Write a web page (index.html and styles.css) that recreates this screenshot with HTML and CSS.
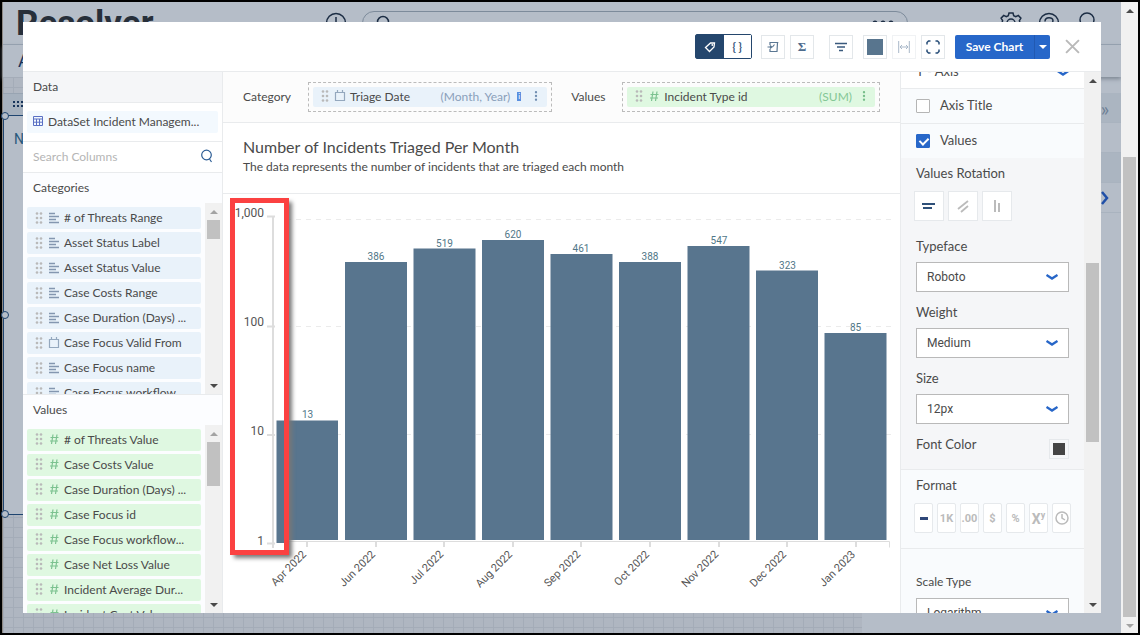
FILE: index.html
```
<!DOCTYPE html>
<html lang="en">

<head>
    <meta charset="UTF-8">
    <meta name="viewport" content="width=device-width, initial-scale=1.0">
    <title>Chart Editor</title>
    <link rel="stylesheet" href="styles.css">
</head>
<body>

    <!-- shared icons -->
    <svg class="sprite" xmlns="http://www.w3.org/2000/svg">
        <symbol id="grip" viewBox="0 0 8 12">
            <g fill="#b9b9b9"><circle cx="2" cy="1.500" r="1.300"/><circle cx="6" cy="1.500" r="1.300"/><circle cx="2" cy="6" r="1.300"/><circle cx="6" cy="6" r="1.300"/><circle cx="2" cy="10.500" r="1.300"/><circle cx="6" cy="10.500" r="1.300"/></g>
        </symbol>
        <symbol id="text" viewBox="0 0 12 12">
            <path d="M1 1.500h6M1 4.500h10M1 7.500h7M1 10.500h10" stroke="#8497b0" stroke-width="1.600"/>
        </symbol>
        <symbol id="date" viewBox="0 0 12 12">
            <path d="M1.500 2.500h9v8h-9zM3.500 0v3M8.500 0v3" fill="none" stroke="#94a8be" stroke-width="1.200"/>
        </symbol>
        <symbol id="hash" viewBox="0 0 12 12">
            <path d="M5 1.500L3.500 11M9 1.500L7.500 11M2.500 4.500h8M2 8h8" fill="none" stroke="#7cc290" stroke-width="1.200"/>
        </symbol>
        <symbol id="more" viewBox="0 0 4 12">
            <circle cx="2" cy="1.500" r="1.400"/><circle cx="2" cy="6" r="1.400"/><circle cx="2" cy="10.500" r="1.400"/>
        </symbol>
        <symbol id="chevron" viewBox="0 0 12 8">
            <path d="M.5 2L6 5.500 11.500 2" fill="none" stroke="#2766c8" stroke-width="2.400"/>
        </symbol>
        <symbol id="up" viewBox="0 0 8 4"><path d="M0 4L4 0l4 4z"/></symbol>
        <symbol id="down" viewBox="0 0 8 4"><path d="M0 0l4 4 4-4z"/></symbol>
    </svg>

    <div class="app">
        <div class="page">
            <header class="topbar">
                <span class="logo">Resolver</span>
                <svg class="add" viewBox="0 0 22 22"><circle cx="11" cy="11" r="9.500"/><path d="M11 5v12M5 11h12"/></svg>
                <div class="search-pill">
                    <svg viewBox="0 0 16 16"><circle cx="8" cy="7" r="5.500"/><path d="M12 11l3 4"/></svg>
                    <svg class="dots" viewBox="0 0 24 6"><circle cx="4" cy="3" r="2.500"/><circle cx="12" cy="3" r="2.500"/><circle cx="20" cy="3" r="2.500"/></svg>
                </div>
                <div class="top-icons">
                    <svg viewBox="0 0 22 22"><path d="M9 1h4l.7 2.800 2 .9L18.300 3.400l2.600 2.800-1.500 2.400.6 2.400-.6 2.400 1.500 2.400-2.600 2.800-2.600-1.300-2 .9L13 21H9l-.7-2.800-2-.9-2.600 1.300-2.600-2.800 1.500-2.400L2 11l.6-2.400-1.500-2.400 2.600-2.800 2.600 1.300 2-.9z"/><circle cx="11" cy="11" r="4"/></svg>
                    <svg viewBox="0 0 22 22"><circle cx="11" cy="11" r="9.500"/><path d="M7 9.500c0-5 8-5 8-.5 0 3-4 2.500-4 5M11 16v2"/></svg>
                    <svg viewBox="0 0 22 22"><circle cx="11" cy="8" r="7"/><path d="M1 22c2-9 18-9 20 0"/></svg>
                </div>
            </header>
            <nav class="navbar"><span>Application</span></nav>
            <div class="workspace">
                <div class="canvas">
                    <div class="widget">
                        <div class="widget-head"><svg class="widget-grip" viewBox="0 0 12 8"><path d="M0 0h2v2H0zM4 0h2v2H4zM8 0h2v2H8zM0 4h2v2H0zM4 4h2v2H4zM8 4h2v2H8z"/></svg></div>
                        <div class="widget-body">
                            <span class="widget-title">Number</span>
                            <i class="handle h-top"></i>
                            <i class="handle h-mid"></i>
                            <i class="handle h-end"></i>
                        </div>
                    </div>
                </div>
                <aside class="side">
                    <div class="side-row shade">»</div>
                    <div class="side-row"></div>
                    <div class="side-row shade"></div>
                    <div class="side-row"><svg viewBox="0 0 10 14"><path d="M2 1l5 6-5 6" fill="none" stroke="#1f4fa8" stroke-width="2.500"/></svg></div>
                </aside>
            </div>
        </div>
        <div class="scrollbar page-scroll">
            <svg class="arrow"><use href="#up"/></svg>
            <div class="track"><div class="thumb"></div></div>
            <svg class="arrow light"><use href="#down"/></svg>
        </div>
    </div>

    <div class="modal">
        <div class="toolbar">
            <div class="toggle">
                <button class="on" aria-label="Labels"><svg viewBox="0 0 12 12"><path d="M1.500 6.500L6.500 2h4l-.5 4-4.500 4.500z" fill="none" stroke="#fff" stroke-width="1.300"/><circle cx="8.300" cy="4" r=".9" fill="#fff"/></svg></button>
                <button aria-label="Code">{ }</button>
            </div>
            <div class="tools">
                <button class="tool" aria-label="Formula"><svg viewBox="0 0 12 12"><path d="M3 4V1.500h8.300M10.500 1.500L10 10.500H3V8M.5 6h4M3 4.500L4.800 6 3 7.500M7.500 3.500L5.500 6" fill="none" stroke="#5b7793" stroke-width="1.200"/></svg></button>
                <button class="tool sigma" aria-label="Sum">Σ</button>
            </div>
            <button class="tool filter" aria-label="Filter"><svg viewBox="0 0 12 12"><path d="M0 2.500h12M2 6h8M4 9.500h4" stroke="#3a5a7d" stroke-width="1.300"/></svg></button>
            <div class="tools">
                <button class="tool" aria-label="Color"><span class="swatch"></span></button>
                <button class="tool faded" aria-label="Fit width"><svg viewBox="0 0 12 12"><path d="M.7 0v12M11.300 0v12M2 6h8M4 4L2 6l2 2M8 4l2 2-2 2" fill="none" stroke="#a9b8c9"/></svg></button>
                <button class="tool" aria-label="Full screen"><svg class="full" viewBox="0 0 14 14"><path d="M1 4.500V2.500L2.500 1h2M9.500 1h2L13 2.500v2M13 9.500v2L11.500 13h-2M4.500 13h-2L1 11.500v-2" fill="none" stroke="#274d78" stroke-width="1.500"/></svg></button>
            </div>
            <div class="save">
                <button class="save-btn">Save Chart</button>
                <button class="save-more" aria-label="More save options"><svg viewBox="0 0 8 4"><use href="#down"/></svg></button>
            </div>
            <button class="close" aria-label="Close"><svg viewBox="0 0 14 14"><path d="M1 1l12 12M13 1L1 13" stroke="#b9b9b9" stroke-width="1.800"/></svg></button>
        </div>

        <div class="content">
            <section class="data">
                <h2 class="data-title">Data</h2>
                <div class="dataset">
                    <div class="dataset-name"><svg viewBox="0 0 10 10"><path d="M.5.5h9v9h-9zM.5 3h9M.5 6.200h9M3.500 3v6.500M6.500 3v6.500" fill="none" stroke="#5a70c4"/></svg>DataSet Incident Managem...</div>
                </div>
                <div class="search">
                    <input type="text" placeholder="Search Columns" aria-label="Search Columns">
                    <svg viewBox="0 0 14 14"><circle cx="6.500" cy="6" r="4.800" fill="none" stroke="#2b5c94" stroke-width="1.200"/><path d="M9.500 10l2 3" stroke="#2b5c94" stroke-width="1.200"/></svg>
                </div>

                <div class="group categories">
                    <h3>Categories</h3>
                    <div class="list-wrap">
                        <ul class="list">
                            <li><svg class="grip"><use href="#grip"/></svg><svg class="kind"><use href="#text"/></svg># of Threats Range</li>
                            <li><svg class="grip"><use href="#grip"/></svg><svg class="kind"><use href="#text"/></svg>Asset Status Label</li>
                            <li><svg class="grip"><use href="#grip"/></svg><svg class="kind"><use href="#text"/></svg>Asset Status Value</li>
                            <li><svg class="grip"><use href="#grip"/></svg><svg class="kind"><use href="#text"/></svg>Case Costs Range</li>
                            <li><svg class="grip"><use href="#grip"/></svg><svg class="kind"><use href="#text"/></svg>Case Duration (Days) ...</li>
                            <li><svg class="grip"><use href="#grip"/></svg><svg class="kind"><use href="#date"/></svg>Case Focus Valid From</li>
                            <li><svg class="grip"><use href="#grip"/></svg><svg class="kind"><use href="#text"/></svg>Case Focus name</li>
                            <li><svg class="grip"><use href="#grip"/></svg><svg class="kind"><use href="#text"/></svg>Case Focus workflow...</li>
                        </ul>
                        <div class="scrollbar">
                            <svg class="arrow light"><use href="#up"/></svg>
                            <div class="track"><div class="thumb"></div></div>
                            <svg class="arrow"><use href="#down"/></svg>
                        </div>
                    </div>
                </div>

                <div class="group values">
                    <h3>Values</h3>
                    <div class="list-wrap">
                        <ul class="list">
                            <li><svg class="grip"><use href="#grip"/></svg><svg class="kind"><use href="#hash"/></svg># of Threats Value</li>
                            <li><svg class="grip"><use href="#grip"/></svg><svg class="kind"><use href="#hash"/></svg>Case Costs Value</li>
                            <li><svg class="grip"><use href="#grip"/></svg><svg class="kind"><use href="#hash"/></svg>Case Duration (Days) ...</li>
                            <li><svg class="grip"><use href="#grip"/></svg><svg class="kind"><use href="#hash"/></svg>Case Focus id</li>
                            <li><svg class="grip"><use href="#grip"/></svg><svg class="kind"><use href="#hash"/></svg>Case Focus workflow...</li>
                            <li><svg class="grip"><use href="#grip"/></svg><svg class="kind"><use href="#hash"/></svg>Case Net Loss Value</li>
                            <li><svg class="grip"><use href="#grip"/></svg><svg class="kind"><use href="#hash"/></svg>Incident Average Dur...</li>
                            <li><svg class="grip"><use href="#grip"/></svg><svg class="kind"><use href="#hash"/></svg>Incident Cost Value</li>
                        </ul>
                        <div class="scrollbar">
                            <svg class="arrow light"><use href="#up"/></svg>
                            <div class="track"><div class="thumb"></div></div>
                            <svg class="arrow"><use href="#down"/></svg>
                        </div>
                    </div>
                </div>
            </section>

            <main class="main">
                <div class="fields">
                    <span class="field-label">Category</span>
                    <div class="drop category">
                        <div class="pill"><svg class="grip"><use href="#grip"/></svg><svg class="kind"><use href="#date"/></svg><span class="pill-name">Triage Date</span><span class="agg">(Month, Year)</span><span class="info">i</span><svg class="more"><use href="#more"/></svg></div>
                    </div>
                    <span class="field-label">Values</span>
                    <div class="drop value">
                        <div class="pill"><svg class="grip"><use href="#grip"/></svg><svg class="kind"><use href="#hash"/></svg><span class="pill-name">Incident Type id</span><span class="agg">(SUM)</span><svg class="more"><use href="#more"/></svg></div>
                    </div>
                </div>
                <div class="titles">
                    <h1>Number of Incidents Triaged Per Month</h1>
                    <p>The data represents the number of incidents that are triaged each month</p>
                </div>
                <svg class="chart" viewBox="0 0 677 419" preserveAspectRatio="xMinYMin meet">
                    <!-- grid and x axis -->
                    <path class="grid" d="M53 25.500h615M53 132.500h615M53 240.500h615"/>
                    <path class="axis" d="M53 347.500h613.500v6"/>
                    <path class="tick" d="M84 347v6M153 347v6M221 347v6M290 347v6M358 347v6M427 347v6M496 347v6M564 347v6M633 347v6"/>

                    <g class="bars">
                        <rect x="53" y="226.500" width="62" height="119.500"/>
                        <rect x="122" y="68" width="62" height="278"/>
                        <rect x="190.500" y="54.500" width="62" height="291.500"/>
                        <rect x="259" y="46" width="62" height="300"/>
                        <rect x="327.500" y="60" width="62" height="286"/>
                        <rect x="396" y="68" width="62" height="278"/>
                        <rect x="464.500" y="52" width="62" height="294"/>
                        <rect x="533" y="76.500" width="62" height="269.500"/>
                        <rect x="601.500" y="139" width="62" height="207"/>
                    </g>
                    <g class="counts">
                        <text x="84.500" y="224">13</text>
                        <text x="153" y="66">386</text>
                        <text x="221.500" y="53">519</text>
                        <text x="290" y="44">620</text>
                        <text x="358" y="58">461</text>
                        <text x="427" y="66">388</text>
                        <text x="496" y="50">547</text>
                        <text x="564.500" y="75">323</text>
                        <text x="632.500" y="137">85</text>
                    </g>

                    <!-- highlighted log scale -->
                    <rect class="mark-back" x="8" y="5" width="58" height="356"/>
                    <rect class="mark-bar" x="53.500" y="226.500" width="10.500" height="122.500"/>
                    <path class="scale" d="M50 22v332M44 22.500h8M44 132.500h8M44 241h8M44 349.500h8"/>
                    <rect class="mark" x="9.500" y="6.500" width="54" height="352"/>
                    <g class="scale-text">
                        <text x="41" y="23">1,000</text>
                        <text x="41" y="132">100</text>
                        <text x="41" y="241">10</text>
                        <text x="41" y="351">1</text>
                    </g>

                    <g class="months">
                        <text transform="translate(84 361) rotate(-45)">Apr 2022</text>
                        <text transform="translate(153 361) rotate(-45)">Jun 2022</text>
                        <text transform="translate(221 361) rotate(-45)">Jul 2022</text>
                        <text transform="translate(290 361) rotate(-45)">Aug 2022</text>
                        <text transform="translate(358 361) rotate(-45)">Sep 2022</text>
                        <text transform="translate(427 361) rotate(-45)">Oct 2022</text>
                        <text transform="translate(496 361) rotate(-45)">Nov 2022</text>
                        <text transform="translate(564 361) rotate(-45)">Dec 2022</text>
                        <text transform="translate(633 361) rotate(-45)">Jan 2023</text>
                    </g>
                </svg>
            </main>

            <section class="settings">
                <div class="options">
                    <div class="axis-row"><span>Y - Axis</span><svg><use href="#chevron"/></svg></div>
                    <div class="check-row"><input type="checkbox" id="axisTitle"><label for="axisTitle">Axis Title</label></div>
                    <div class="check-row"><input type="checkbox" id="axisValues" checked><label for="axisValues">Values</label></div>
                    <div class="values-box">
                        <p class="opt-label">Values Rotation</p>
                        <div class="rotations">
                            <button aria-label="Horizontal"><svg viewBox="0 0 14 14"><path d="M0 5h13M1 9h9" stroke="#2f5079" stroke-width="2"/></svg></button>
                            <button aria-label="Diagonal"><svg viewBox="0 0 14 14"><path d="M2 10L12 2M5 13l7-6" stroke="#bbb" stroke-width="1.800"/></svg></button>
                            <button aria-label="Vertical"><svg viewBox="0 0 14 14"><path d="M5 1v12M9 4v9" stroke="#bbb" stroke-width="2"/></svg></button>
                        </div>
                        <label class="opt-label" for="typeface">Typeface</label>
                        <div class="select"><select id="typeface"><option>Roboto</option></select><svg><use href="#chevron"/></svg></div>
                        <label class="opt-label" for="weight">Weight</label>
                        <div class="select"><select id="weight"><option>Medium</option></select><svg><use href="#chevron"/></svg></div>
                        <label class="opt-label" for="size">Size</label>
                        <div class="select"><select id="size"><option>12px</option></select><svg><use href="#chevron"/></svg></div>
                        <div class="color-row"><span class="opt-label">Font Color</span><button aria-label="Font Color"></button></div>
                    </div>
                    <div class="format-box">
                        <p class="opt-label">Format</p>
                        <div class="formats">
                            <button class="active" aria-label="None"><svg viewBox="0 0 8 3"><path d="M0 1.500h8" stroke="#2f4779" stroke-width="3"/></svg></button>
                            <button>1K</button>
                            <button>.00</button>
                            <button>$</button>
                            <button>%</button>
                            <button class="power">X<sup>y</sup></button>
                            <button aria-label="Time"><svg class="clock" viewBox="0 0 14 14"><circle cx="7" cy="7" r="6" fill="none" stroke="#bbb" stroke-width="1.500"/><path d="M7 3v4l3 2" fill="none" stroke="#bbb" stroke-width="1.500"/></svg></button>
                        </div>
                    </div>
                    <div class="scale-box">
                        <label class="opt-label small" for="scaleType">Scale Type</label>
                        <div class="select"><select id="scaleType"><option>Logarithm</option></select><svg><use href="#chevron"/></svg></div>
                    </div>
                </div>
                <div class="scrollbar">
                    <svg class="arrow"><use href="#up"/></svg>
                    <div class="track"><div class="thumb"></div></div>
                    <svg class="arrow"><use href="#down"/></svg>
                </div>
            </section>
        </div>
    </div>

</body>

</html>
```
FILE: styles.css
```
* {
    box-sizing: border-box;
}

body {
    margin: 0;
    height: 100vh;
    overflow: hidden;
    font-family: Lato, sans-serif;
    font-size: 12px;
    color: #4a4a4a;
}

button,
input,
select {
    font-family: inherit;
    font-size: inherit;
    color: inherit;
    margin: 0;
    padding: 0;
}

h1,
h2,
h3,
p,
ul {
    margin: 0;
    padding: 0;
    font-weight: normal;
    list-style: none;
}

svg {
    flex: none;
}

.sprite {
    position: absolute;
    width: 0;
    height: 0;
}

/* page behind the dialog */
.app {
    display: flex;
    height: 100vh;
    border: 2px solid #000;
    background-color: #b5bdc8;
}

.page {
    flex: 1;
    display: flex;
    flex-direction: column;
    border-left: 1px solid #8e8984;
}

.topbar {
    display: flex;
    align-items: center;
    height: 43px;
    padding-left: 13px;
    border-bottom: 1px solid #98a4b2;
    overflow: hidden;
}

.topbar svg {
    fill: none;
    stroke: #1c2d44;
    stroke-width: 1.5;
}

.logo {
    width: 309px;
    font: bold 35px Roboto, sans-serif;
    color: #272f3a;
}

.add {
    width: 22px;
    height: 22px;
}

.search-pill {
    flex: 1;
    display: flex;
    justify-content: space-between;
    align-items: center;
    height: 24px;
    margin: 0 92px 0 15px;
    padding: 0 12px;
    border: 1px solid #7d8b9b;
    border-radius: 12px;
}

.search-pill svg {
    width: 16px;
    height: 16px;
}

.search-pill .dots {
    width: 24px;
    height: 6px;
    fill: #1c2d44;
    stroke: none;
}

.top-icons {
    display: flex;
    gap: 16px;
    padding-right: 23px;
}

.top-icons svg {
    width: 22px;
    height: 22px;
}

.navbar {
    height: 32px;
    padding: 4px 15px;
    font: 18px/24px Roboto, sans-serif;
    color: #17345a;
    box-shadow: 0 2px 4px #7d8793;
}

.workspace {
    flex: 1;
    display: flex;
}

.canvas {
    flex: 1;
    margin-right: 227px;
    padding-top: 16px;
    background-color: #afb6c1;
    background-image: linear-gradient(#a4acb8 1px, transparent 1px), linear-gradient(90deg, #a4acb8 1px, transparent 1px);
    background-size: 10px 10px;
}

.widget-head {
    height: 22px;
    padding: 7px 10px;
    background-color: #a6b1be;
    border-top: 1px solid #98a4b2;
}

.widget-grip {
    display: block;
    width: 12px;
    height: 8px;
    fill: #17345a;
}

.widget-body {
    position: relative;
    height: 400px;
    padding: 12px 10px;
    background-color: #b5bdc8;
    border: 1px solid #1f4570;
}

.widget-title {
    display: block;
    height: 34px;
    font: 14px/22px Roboto, sans-serif;
    color: #28597c;
}

.handle {
    position: absolute;
    left: -3px;
    width: 8px;
    height: 8px;
    border: 1px solid #1f4570;
    border-radius: 50%;
    background-color: #b5bdc8;
}

.h-top {
    top: -4px;
}

.h-mid {
    top: 195px;
}

.h-end {
    bottom: -4px;
}

.side {
    width: 32px;
    padding-top: 16px;
}

.side-row {
    display: flex;
    align-items: center;
    justify-content: center;
    height: 30px;
    font-size: 20px;
    color: #6e8095;
    border-bottom: 1px solid #a9b3bf;
}

.shade {
    background-color: #abb5c1;
}

.side-row svg {
    width: 10px;
    height: 14px;
}

/* scrollbars */
.scrollbar {
    flex: none;
    display: flex;
    flex-direction: column;
    align-items: center;
    width: 17px;
    background-color: #f1f1f1;
}

.arrow {
    width: 8px;
    height: 4px;
    margin: 7px 0 6px;
    fill: #4a4a4a;
}

.light {
    fill: #a3a3a3;
}

.track {
    flex: 1;
    width: 13px;
}

.thumb {
    height: 19px;
    background-color: #c1c1c1;
}

.page-scroll .track {
    padding-top: 138px;
}

.page-scroll .thumb {
    height: 460px;
}

/* dialog */
.modal {
    position: fixed;
    top: 22px;
    right: 39px;
    bottom: 22px;
    left: 23px;
    display: flex;
    flex-direction: column;
    background-color: #fff;
    overflow: hidden;
}

.toolbar {
    display: flex;
    flex: none;
    align-items: center;
    justify-content: flex-end;
    height: 50px;
    padding-right: 21px;
    border-bottom: 1px solid #e9ebed;
}

.toggle {
    display: flex;
    width: 57px;
    height: 25px;
    margin-right: 9px;
    border: 1px solid #24466d;
    border-radius: 2px;
}

.toggle button {
    flex: 1;
    border: 0;
    background-color: #fff;
    color: #35557a;
    font-size: 11px;
    font-weight: bold;
}

.toggle .on {
    background-color: #24466d;
}

.toggle svg {
    display: block;
    width: 12px;
    height: 12px;
    margin: auto;
}

.tools {
    display: flex;
    gap: 5px;
}

.tool {
    display: flex;
    align-items: center;
    justify-content: center;
    width: 24px;
    height: 24px;
    border: 1px solid #e3e7ea;
    background-color: #fff;
}

.tool svg {
    width: 12px;
    height: 12px;
}

.tool .full {
    width: 14px;
    height: 14px;
}

.sigma {
    font: bold 13px "Liberation Serif", serif;
    color: #4d6b8d;
}

.filter {
    margin: 0 10px 0 15px;
}

.faded {
    border-color: #f0f2f4;
}

.swatch {
    width: 16px;
    height: 16px;
    background-color: #58758e;
}

.save {
    display: flex;
    width: 95px;
    height: 24px;
    margin: 0 15px 0 10px;
    border-radius: 2px;
    background-color: #2767c9;
    overflow: hidden;
}

.save button {
    border: 0;
    background: none;
    color: #fff;
}

.save-btn {
    flex: 1;
    font-weight: bold;
}

.save .save-more {
    width: 16px;
    border-left: 1px solid #2159b2;
}

.save svg {
    display: block;
    width: 8px;
    height: 4px;
    margin: auto;
    fill: #fff;
}

.close {
    border: 0;
    background: none;
}

.close svg {
    display: block;
    width: 15px;
    height: 15px;
}

.content {
    flex: 1;
    display: flex;
    min-height: 0;
}

/* data column */
.data {
    display: flex;
    flex-direction: column;
    width: 200px;
    border-right: 1px solid #e9ebed;
    background-color: #fcfdff;
}

.data-title {
    height: 31px;
    padding-left: 10px;
    font-size: 12px;
    line-height: 29px;
    background-color: #f5f6f8;
    border-bottom: 1px solid #e9ebed;
}

.dataset {
    padding: 8px 4px;
    background-color: #fff;
    border-bottom: 1px solid #e9ebed;
}

.dataset-name {
    display: flex;
    align-items: center;
    gap: 5px;
    height: 22px;
    padding: 0 0 2px 6px;
    border-radius: 2px;
    background-color: #f3f9fe;
    white-space: nowrap;
}

.dataset-name svg {
    width: 10px;
    height: 10px;
}

.search {
    display: flex;
    align-items: center;
    height: 31px;
    padding: 0 8px 2px 10px;
    background-color: #fff;
    border-bottom: 1px solid #e9ebed;
}

.search input {
    flex: 1;
    min-width: 0;
    border: 0;
    background: none;
}

.search input::placeholder {
    color: #b5b5b5;
}

.search svg {
    width: 14px;
    height: 14px;
}

.group {
    display: flex;
    flex-direction: column;
    min-height: 0;
}

.categories {
    flex: 221;
}

.values {
    flex: 219;
    border-top: 1px solid #e9ebed;
}

.group h3 {
    height: 30px;
    padding-left: 10px;
    font-size: 12px;
    line-height: 30px;
}

.list-wrap {
    flex: 1;
    display: flex;
    justify-content: space-between;
    min-height: 0;
}

.list {
    display: flex;
    flex-direction: column;
    gap: 3px;
    width: 178px;
    padding: 4px 0 0 4px;
    overflow: hidden;
}

.list li {
    display: flex;
    flex: none;
    align-items: center;
    height: 22px;
    padding: 0 0 1px 8px;
    border-radius: 2px;
    background-color: #e9f2fa;
    white-space: nowrap;
}

.values li {
    background-color: #dff8e1;
}

.grip {
    width: 8px;
    height: 12px;
}

.kind {
    width: 12px;
    height: 12px;
    margin: 0 4px 0 5px;
}

.values .thumb {
    height: 44px;
}

/* chart column */
.main {
    flex: 1;
    display: flex;
    flex-direction: column;
    min-width: 0;
}

.fields {
    display: flex;
    align-items: center;
    height: 51px;
    padding: 0 20px;
    background-color: #fcfcfc;
    border-bottom: 1px solid #e9ebed;
}

.field-label {
    width: 65px;
    padding-bottom: 2px;
}

.drop {
    flex: 244;
    padding: 4px;
    border: 1px dashed #bbb;
}

.value {
    flex: 258;
}

.category {
    margin-right: 19px;
}

.category + .field-label {
    width: 51px;
}

.pill {
    display: flex;
    align-items: center;
    height: 20px;
    padding: 0 9px 2px 8px;
    border-radius: 2px;
    background-color: #e9f2fa;
}

.value .pill {
    background-color: #dff8e1;
}

.pill-name {
    flex: 1;
}

.agg {
    color: #8aa0ba;
}

.info {
    margin: 0 13px 0 7px;
    width: 4px;
    height: 9px;
    background-color: #5a8fdf;
    color: #fff;
    font-size: 8px;
    line-height: 9px;
    text-align: center;
}

.more {
    width: 4px;
    height: 10px;
    fill: #6f8db0;
}

.value .agg {
    margin-right: 10px;
    color: #84c795;
}

.value .more {
    fill: #74bd88;
}

.titles {
    height: 71px;
    padding: 14px 20px;
    border-bottom: 1px solid #e9ebed;
}

.titles h1 {
    font-size: 16px;
    line-height: 20px;
}

.titles p {
    line-height: 20px;
}

.chart {
    width: 100%;
    font-family: Roboto, sans-serif;
}

.grid {
    fill: none;
    stroke: #ebebeb;
    stroke-dasharray: 5 5;
}

.axis {
    fill: none;
    stroke: #ddd;
}

.tick,
.scale {
    fill: none;
    stroke: #ddd;
    stroke-width: 2;
}

.bars rect,
.mark-bar {
    fill: #58758e;
}

.counts text {
    font-size: 10px;
    text-anchor: middle;
    fill: #517788;
}

.mark-back {
    fill: #fff;
    filter: drop-shadow(3px 3px 2px #777);
}

.mark {
    fill: none;
    stroke: #fb4141;
    stroke-width: 5;
}

.scale-text text,
.months text {
    font-size: 12px;
    text-anchor: end;
    fill: #555;
}

.months text {
    font-size: 11px;
}

/* settings column */
.settings {
    display: flex;
    width: 201px;
    border-left: 1px solid #e9ebed;
}

.options {
    flex: 1;
    overflow: hidden;
    background-color: #f9fbfd;
    font-size: 13px;
}

.axis-row {
    display: flex;
    justify-content: space-between;
    align-items: flex-end;
    height: 17px;
    padding: 0 15px 8px;
    line-height: 18px;
    overflow: hidden;
    background-color: #fff;
    border-bottom: 1px solid #e9ebed;
}

.axis-row svg,
.select svg {
    width: 12px;
    height: 8px;
}

.axis-row svg {
    margin-bottom: 3px;
}

.check-row {
    display: flex;
    align-items: center;
    gap: 10px;
    height: 35px;
    padding: 0 0 1px 15px;
    border-bottom: 1px solid #e9ebed;
}

.check-row label {
    padding-bottom: 1px;
}

.check-row + .check-row {
    height: 34px;
    border-bottom: 0;
}

.check-row input {
    appearance: none;
    width: 14px;
    height: 14px;
    border: 1px solid #b5b5b5;
    border-radius: 1px;
    background-color: #fff;
}

.check-row input:checked {
    border-color: #2767c9;
    background-color: #2767c9;
}

.check-row input:checked::after {
    content: "";
    display: block;
    width: 4px;
    height: 7px;
    margin: 1px 0 0 4px;
    border: solid #fff;
    border-width: 0 2px 2px 0;
    transform: rotate(45deg);
}

.values-box {
    height: 312px;
    padding: 5px 15px 0;
    background-color: #f5f6f8;
    border-bottom: 1px solid #e9ebed;
}

.opt-label {
    display: block;
    line-height: 20px;
}

.rotations {
    display: flex;
    gap: 4px;
    margin: 8px 0 15px -2px;
}

.rotations button {
    width: 30px;
    height: 30px;
    border: 1px solid #e6e9ec;
    background-color: #fff;
}

.rotations svg {
    display: block;
    width: 14px;
    height: 14px;
    margin: auto;
}

.select {
    display: flex;
    align-items: center;
    margin: 6px 0 10px;
}

.select select {
    flex: 1;
    appearance: none;
    height: 30px;
    padding: 0 10px;
    border: 1px solid #b9b9b9;
    border-radius: 0;
    background-color: #fff;
    font: 12px Roboto, sans-serif;
}

.select svg {
    margin: 0 11px 0 -23px;
}

.color-row {
    display: flex;
    justify-content: space-between;
}

.color-row button {
    width: 20px;
    height: 20px;
    margin-top: 5px;
    border: 1px solid #e6e9ec;
    padding: 3px;
    background: #444 content-box;
}

.format-box {
    height: 79px;
    padding: 5px 13px 0;
    border-bottom: 1px solid #e9ebed;
}

.format-box .opt-label {
    padding-left: 2px;
}

.formats {
    display: flex;
    gap: 4px;
    margin-top: 8px;
}

.formats button {
    width: 19px;
    height: 30px;
    border: 1px solid #e6e9ec;
    border-radius: 2px;
    background-color: #fff;
    color: #bbb;
    font: bold 11px Roboto, sans-serif;
}

.formats svg {
    display: block;
    width: 8px;
    height: 3px;
    margin: auto;
}

.formats .clock {
    width: 14px;
    height: 14px;
}

.formats .power {
    font-size: 14px;
    white-space: nowrap;
}

.power sup {
    font-size: 9px;
}

.scale-box {
    padding: 23px 15px 0;
}

.small {
    font-size: 12px;
}

.settings .track {
    padding-top: 174px;
}

.settings .thumb {
    height: 179px;
}
```
